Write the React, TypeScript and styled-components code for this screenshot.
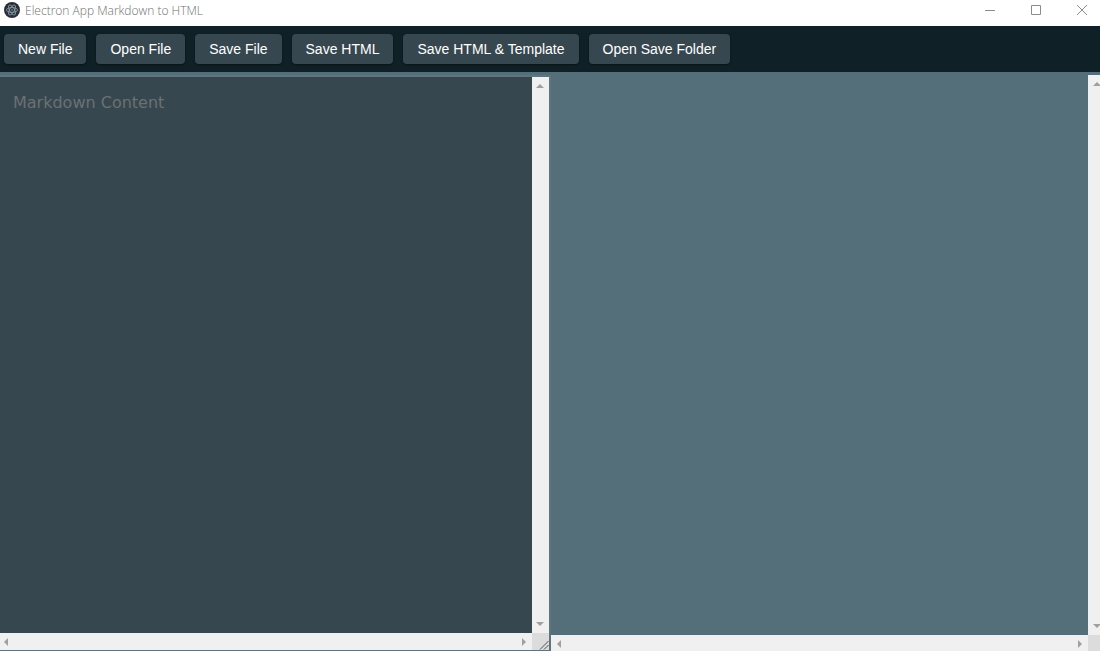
import React from "react";
import styled, { createGlobalStyle } from "styled-components";

const GlobalStyle = createGlobalStyle`
  *, *::before, *::after { box-sizing: border-box; }
  body { margin: 0; background: #546e7a; overflow: hidden; }
`;

const Shell = styled.div`
  display: flex;
  flex-direction: column;
  height: 100vh;
  overflow: hidden;
  background: #546e7a;
  font-family: "Liberation Sans", sans-serif;
`;

const TitleBar = styled.header`
  display: flex;
  align-items: center;
  flex: none;
  height: 26px;
  padding: 0 0 6px 4px;
  background: #ffffff;
`;

const AppTitle = styled.h1`
  flex: 1;
  margin: 2px 0 0 5px;
  font: 300 12px/16px "Open Sans", "Noto Sans", sans-serif;
  color: #707070;
`;

const WindowButton = styled.button`
  display: flex;
  align-items: center;
  justify-content: center;
  width: 46px;
  height: 20px;
  padding: 0;
  border: 0;
  background: transparent;
  color: #8c8c8c;
`;

const WindowButtons = styled.div`
  display: flex;
  margin-right: -5px;
`;

const Toolbar = styled.nav`
  display: flex;
  align-items: center;
  gap: 10px;
  flex: none;
  height: 46px;
  padding: 0 4px;
  background: #102027;
`;

const ToolButton = styled.button`
  height: 30px;
  padding: 0 14px;
  border: 0;
  border-radius: 4px;
  background: #37474f;
  box-shadow: 0 1px 2px rgba(0, 0, 0, 0.4);
  color: #ffffff;
  font: 400 14px/30px "Liberation Sans", sans-serif;
  white-space: nowrap;
`;

const Workspace = styled.main`
  display: flex;
  flex: 1;
  min-height: 0;
  margin: 3px -5px -1px -2px;
`;

const Pane = styled.section<{ $framed?: boolean }>`
  display: grid;
  grid-template-columns: minmax(0, 1fr) 17px;
  grid-template-rows: minmax(0, 1fr) 17px;
  flex: ${(p) => (p.$framed ? "0 0 auto" : "1")};
  width: ${(p) => (p.$framed ? "calc(50% - 1px)" : "auto")};
  min-width: 0;
  border: solid #60747e;
  border-width: ${(p) => (p.$framed ? "2px 2px 2px 0" : "0")};
`;

const Editor = styled.textarea`
  width: 100%;
  height: 100%;
  padding: 15px;
  border: 0;
  outline: 0;
  resize: none;
  overflow: hidden;
  background: #37474f;
  color: #ffffff;
  font: 400 16px/22px "DejaVu Sans", sans-serif;
  &::placeholder { color: #6c7072; opacity: 1; }
`;

const Preview = styled.article`
  background: #546e7a;
`;

const Track = styled.div<{ $vertical?: boolean }>`
  display: flex;
  flex-direction: ${(p) => (p.$vertical ? "column" : "row")};
  align-items: center;
  justify-content: space-between;
  padding: ${(p) => (p.$vertical ? "5px 0" : "0 4px")};
  background: #f0f0f0;
  color: #a0a0a0;
`;

const Corner = styled.div`
  display: flex;
  align-items: flex-end;
  justify-content: flex-end;
  background: #dcdcdc;
`;

const arrows = {
  up: "M0 6h8L4 2z",
  down: "M0 2h8L4 6z",
  left: "M6 0v8L2 4z",
  right: "M2 0v8l4-4z",
};

function Arrow({ to }: { to: keyof typeof arrows }) {
  return (
    <svg width="8" height="8" viewBox="0 0 8 8" fill="currentColor" aria-hidden="true">
      <path d={arrows[to]} />
    </svg>
  );
}

function VerticalBar() {
  return <Track $vertical><Arrow to="up" /><Arrow to="down" /></Track>;
}

function HorizontalBar() {
  return <Track><Arrow to="left" /><Arrow to="right" /></Track>;
}

function ElectronLogo() {
  return (
    <svg width="16" height="16" viewBox="0 0 16 16" aria-hidden="true">
      <circle cx="8" cy="8" r="8" fill="#2b2e3a" />
      <g fill="none" stroke="#a5c3c9" strokeWidth="0.8" opacity="0.8">
        <ellipse cx="8" cy="8" rx="5.6" ry="2.4" />
        <ellipse cx="8" cy="8" rx="5.6" ry="2.4" transform="rotate(60 8 8)" />
        <ellipse cx="8" cy="8" rx="5.6" ry="2.4" transform="rotate(120 8 8)" />
      </g>
      <circle cx="8" cy="8" r="0.7" fill="#a5c3c9" />
    </svg>
  );
}

const actions = [
  "New File",
  "Open File",
  "Save File",
  "Save HTML",
  "Save HTML & Template",
  "Open Save Folder",
];

export default function App() {
  return (
    <Shell>
      <GlobalStyle />
      <TitleBar>
        <ElectronLogo />
        <AppTitle>Electron App Markdown to HTML</AppTitle>
        <WindowButtons>
          <WindowButton aria-label="Minimize">
            <svg width="10" height="10" stroke="currentColor"><path d="M0 5.5h10" /></svg>
          </WindowButton>
          <WindowButton aria-label="Maximize">
            <svg width="10" height="10" stroke="currentColor" fill="none"><path d="M.5.5h9v9h-9z" /></svg>
          </WindowButton>
          <WindowButton aria-label="Close">
            <svg width="10" height="10" stroke="currentColor"><path d="M0 0l10 10M10 0L0 10" /></svg>
          </WindowButton>
        </WindowButtons>
      </TitleBar>
      <Toolbar>
        {actions.map((label) => (
          <ToolButton key={label} type="button">{label}</ToolButton>
        ))}
      </Toolbar>
      <Workspace>
        <Pane $framed>
          <Editor aria-label="Markdown Content" placeholder="Markdown Content" />
          <VerticalBar />
          <HorizontalBar />
          <Corner>
            <svg width="10" height="10" stroke="#505050" aria-hidden="true">
              <path d="M1 9.5L9.5 1M5 9.5L9.5 5" />
            </svg>
          </Corner>
        </Pane>
        <Pane>
          <Preview aria-label="HTML preview" />
          <VerticalBar />
          <HorizontalBar />
          <Corner />
        </Pane>
      </Workspace>
    </Shell>
  );
}
